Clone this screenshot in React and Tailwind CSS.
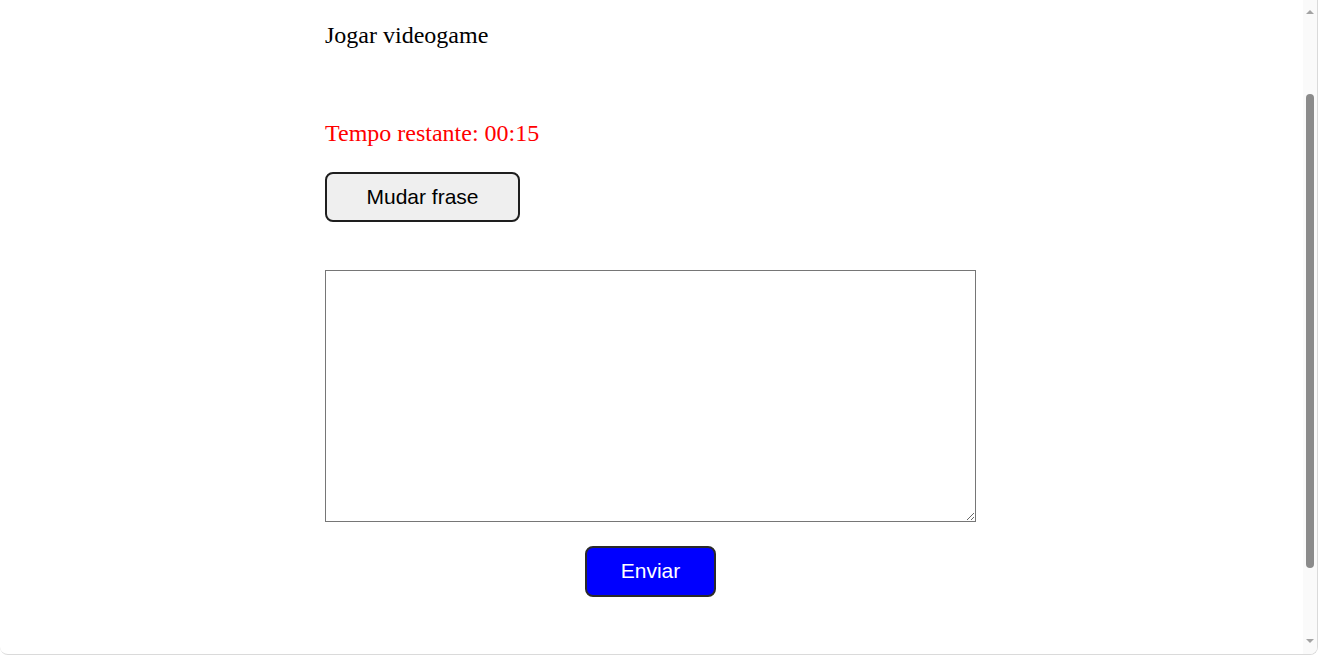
import React from "react";

export default function App() {
  return (
    <div className="w-[1318px] h-[657px] bg-white overflow-hidden">
      <div className="h-[655px] flex border-b border-r border-[#dadada] rounded-b-[8px] overflow-hidden">
        <div className="flex-1 pl-[325px]">
          <div className="w-[651px] flex flex-col items-start">
            <p className="mt-[22px] text-[24px] leading-[27px] text-black font-['Liberation_Serif',serif]">
              Jogar videogame
            </p>
            <p className="mt-[71px] text-[24px] leading-[27px] text-[#ff0000] font-['Liberation_Serif',serif]">
              Tempo restante: 00:15
            </p>
            <button className="mt-[25px] w-[195px] h-[50px] pb-[1px] rounded-[8px] border-2 border-[#1e1e1e] bg-[#efefef] text-[21px] leading-[24px] text-black font-['Liberation_Sans',Arial,sans-serif]">
              Mudar frase
            </button>
            <textarea className="mt-[48px] w-[651px] h-[252px] border border-[#767676] bg-white outline-none" />
            <div className="w-full flex justify-center mt-[24px]">
              <button className="w-[131px] h-[51px] pb-[2px] rounded-[8px] border-2 border-[#2a2a2a] bg-[#0000ff] text-[21px] leading-[24px] text-white font-['Liberation_Sans',Arial,sans-serif]">
                Enviar
              </button>
            </div>
          </div>
        </div>
        <div className="w-[14px] bg-[#fafafa] flex flex-col items-center">
          <svg width="10" height="8" viewBox="0 0 10 8" className="mt-[8px]">
            <path d="M1 6 L5 2 L9 6 Z" fill="#a3a3a3" />
          </svg>
          <div className="mt-[78px] w-[8px] h-[474px] rounded-full bg-[#8b8b8b]" />
          <div className="flex-1" />
          <svg width="10" height="8" viewBox="0 0 10 8" className="mb-[9px]">
            <path d="M1 2 L5 6 L9 2 Z" fill="#a3a3a3" />
          </svg>
        </div>
      </div>
    </div>
  );
}
